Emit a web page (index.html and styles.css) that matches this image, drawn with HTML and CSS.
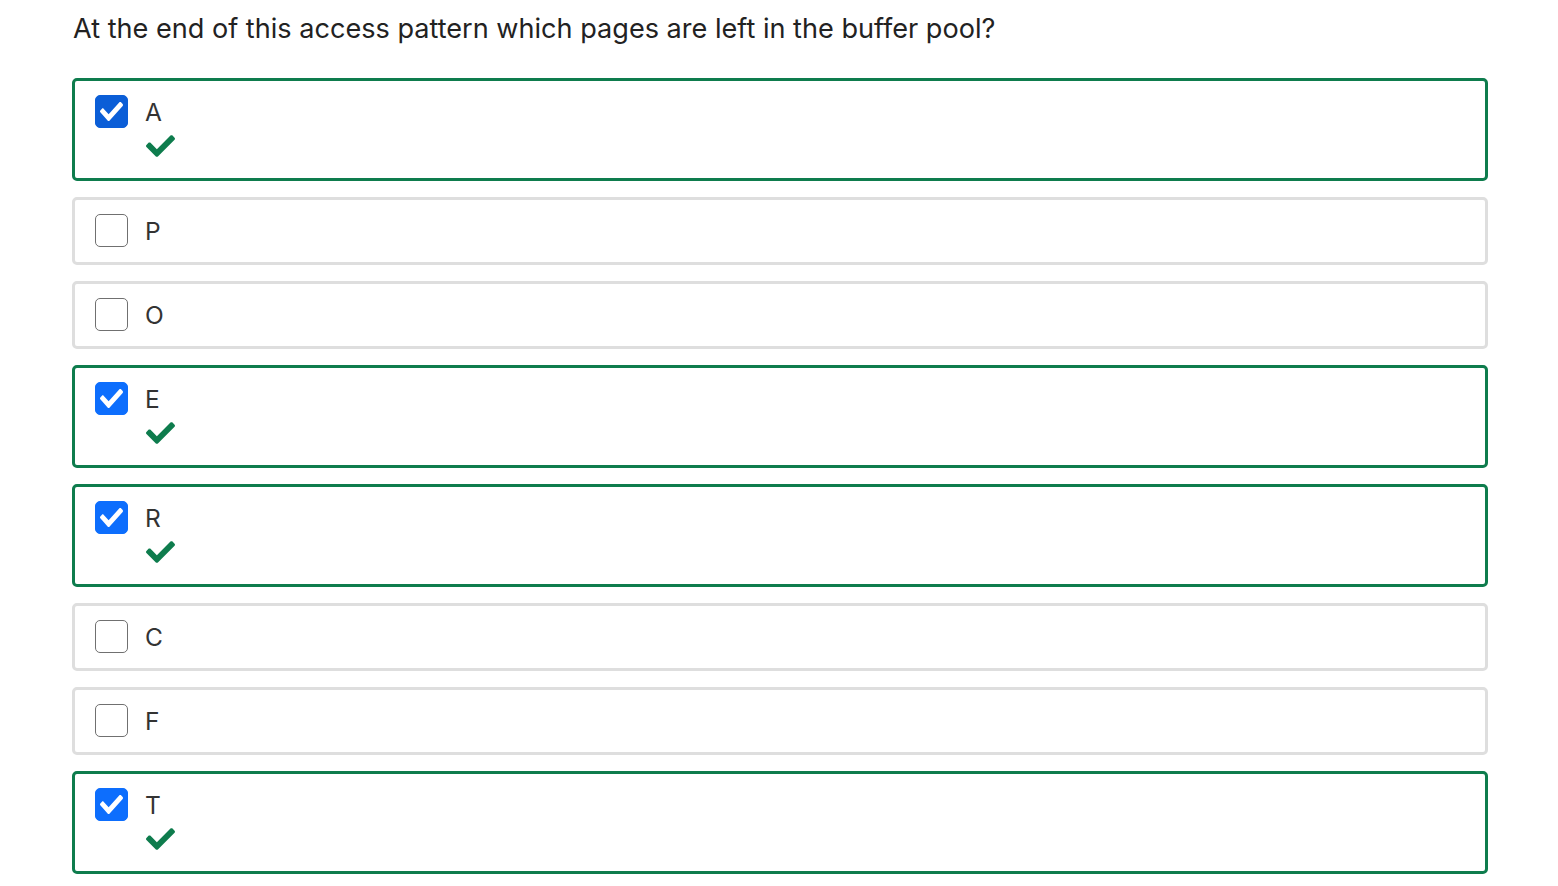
FILE: index.html
```html
<!DOCTYPE html>
<html lang="en">
<head>
<meta charset="utf-8">
<title>Quiz</title>
<link rel="stylesheet" href="styles.css">
</head>
<body>
<main class="quiz">
  <p class="question">At the end of this access pattern which pages are left in the buffer pool?</p>
  <div class="options">
    <div class="opt correct">
      <span class="box checked focus"><svg viewBox="0 67 512 378" preserveAspectRatio="none"><path d="M173.898 439.404l-166.4-166.4c-9.997-9.997-9.997-26.206 0-36.204l36.203-36.204c9.997-9.998 26.207-9.998 36.204 0L192 312.69 432.095 72.596c9.997-9.997 26.207-9.997 36.204 0l36.203 36.204c9.997 9.997 9.997 26.206 0 36.204l-294.4 294.401c-9.998 9.997-26.207 9.997-36.204-.001z"/></svg></span>
      <div class="body"><span class="label">A</span><svg class="mark" viewBox="0 67 512 378"><path d="M173.898 439.404l-166.4-166.4c-9.997-9.997-9.997-26.206 0-36.204l36.203-36.204c9.997-9.998 26.207-9.998 36.204 0L192 312.69 432.095 72.596c9.997-9.997 26.207-9.997 36.204 0l36.203 36.204c9.997 9.997 9.997 26.206 0 36.204l-294.4 294.401c-9.998 9.997-26.207 9.997-36.204-.001z"/></svg></div>
    </div>
    <div class="opt">
      <span class="box"></span>
      <div class="body"><span class="label">P</span></div>
    </div>
    <div class="opt">
      <span class="box"></span>
      <div class="body"><span class="label">O</span></div>
    </div>
    <div class="opt correct">
      <span class="box checked"><svg viewBox="0 67 512 378" preserveAspectRatio="none"><path d="M173.898 439.404l-166.4-166.4c-9.997-9.997-9.997-26.206 0-36.204l36.203-36.204c9.997-9.998 26.207-9.998 36.204 0L192 312.69 432.095 72.596c9.997-9.997 26.207-9.997 36.204 0l36.203 36.204c9.997 9.997 9.997 26.206 0 36.204l-294.4 294.401c-9.998 9.997-26.207 9.997-36.204-.001z"/></svg></span>
      <div class="body"><span class="label">E</span><svg class="mark" viewBox="0 67 512 378"><path d="M173.898 439.404l-166.4-166.4c-9.997-9.997-9.997-26.206 0-36.204l36.203-36.204c9.997-9.998 26.207-9.998 36.204 0L192 312.69 432.095 72.596c9.997-9.997 26.207-9.997 36.204 0l36.203 36.204c9.997 9.997 9.997 26.206 0 36.204l-294.4 294.401c-9.998 9.997-26.207 9.997-36.204-.001z"/></svg></div>
    </div>
    <div class="opt correct">
      <span class="box checked"><svg viewBox="0 67 512 378" preserveAspectRatio="none"><path d="M173.898 439.404l-166.4-166.4c-9.997-9.997-9.997-26.206 0-36.204l36.203-36.204c9.997-9.998 26.207-9.998 36.204 0L192 312.69 432.095 72.596c9.997-9.997 26.207-9.997 36.204 0l36.203 36.204c9.997 9.997 9.997 26.206 0 36.204l-294.4 294.401c-9.998 9.997-26.207 9.997-36.204-.001z"/></svg></span>
      <div class="body"><span class="label">R</span><svg class="mark" viewBox="0 67 512 378"><path d="M173.898 439.404l-166.4-166.4c-9.997-9.997-9.997-26.206 0-36.204l36.203-36.204c9.997-9.998 26.207-9.998 36.204 0L192 312.69 432.095 72.596c9.997-9.997 26.207-9.997 36.204 0l36.203 36.204c9.997 9.997 9.997 26.206 0 36.204l-294.4 294.401c-9.998 9.997-26.207 9.997-36.204-.001z"/></svg></div>
    </div>
    <div class="opt">
      <span class="box"></span>
      <div class="body"><span class="label">C</span></div>
    </div>
    <div class="opt">
      <span class="box"></span>
      <div class="body"><span class="label">F</span></div>
    </div>
    <div class="opt correct">
      <span class="box checked"><svg viewBox="0 67 512 378" preserveAspectRatio="none"><path d="M173.898 439.404l-166.4-166.4c-9.997-9.997-9.997-26.206 0-36.204l36.203-36.204c9.997-9.998 26.207-9.998 36.204 0L192 312.69 432.095 72.596c9.997-9.997 26.207-9.997 36.204 0l36.203 36.204c9.997 9.997 9.997 26.206 0 36.204l-294.4 294.401c-9.998 9.997-26.207 9.997-36.204-.001z"/></svg></span>
      <div class="body"><span class="label">T</span><svg class="mark" viewBox="0 67 512 378"><path d="M173.898 439.404l-166.4-166.4c-9.997-9.997-9.997-26.206 0-36.204l36.203-36.204c9.997-9.998 26.207-9.998 36.204 0L192 312.69 432.095 72.596c9.997-9.997 26.207-9.997 36.204 0l36.203 36.204c9.997 9.997 9.997 26.206 0 36.204l-294.4 294.401c-9.998 9.997-26.207 9.997-36.204-.001z"/></svg></div>
    </div>
  </div>
</main>
</body>
</html>
```

FILE: styles.css
```css
* { box-sizing: border-box; }
html, body { margin: 0; padding: 0; background: #fff; }
body {
  font-family: Inter, "Noto Sans", "Liberation Sans", sans-serif;
  color: #212529;
}
.quiz {
  padding: 10px 70px 0 72px;
}
.question {
  margin: 0 0 31px 1px;
  font-size: 27.1px;
  line-height: 37px;
  color: #222;
}
.options {
  display: flex;
  flex-direction: column;
  gap: 16px;
}
.opt {
  display: flex;
  align-items: flex-start;
  gap: 17px;
  padding: 14px 20px;
  border: 3px solid #dedede;
  border-radius: 5px;
}
.opt.correct {
  border-color: #0e7c4d;
}
.box {
  flex: none;
  width: 33px;
  height: 33px;
  border: 1.5px solid #707070;
  border-radius: 5px;
  background: #fff;
  display: flex;
  align-items: center;
  justify-content: center;
}
.box.checked {
  background: #0d6efd;
  border-color: #0d6efd;
}
.box.checked.focus {
  background: #0b5ed7;
  border-color: #0b5ed7;
}
.box svg {
  width: 23px;
  height: 19px;
  fill: #fff;
}
.body {
  display: flex;
  flex-direction: column;
  align-items: flex-start;
}
.label {
  font-size: 24.5px;
  line-height: 34px;
  color: #333;
}
.mark {
  width: 29px;
  height: 22px;
  margin: 6px 0 7px 1px;
  fill: #0e7c4d;
}
```
